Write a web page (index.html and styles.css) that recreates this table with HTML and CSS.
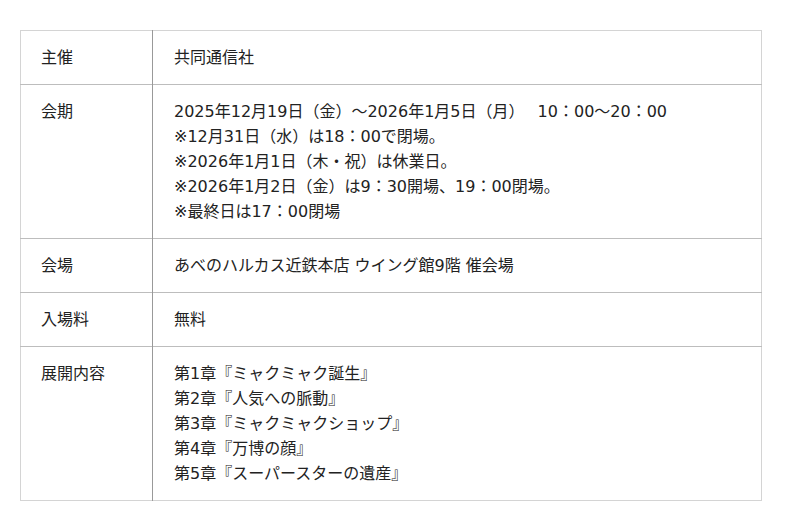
FILE: index.html
```html
<!DOCTYPE html>
<html lang="ja">
<head>
<meta charset="utf-8">
<link rel="stylesheet" href="styles.css">
</head>
<body>
<table class="info">
  <tr><th>主催</th><td>共同通信社</td></tr>
  <tr><th>会期</th><td>2025年12月19日（金）～2026年1月5日（月）　&nbsp;10：00～20：00<br>※12月31日（水）は18：00で閉場。<br>※2026年1月1日（木・祝）は休業日。<br>※2026年1月2日（金）は9：30開場、19：00閉場。<br>※最終日は17：00閉場</td></tr>
  <tr><th>会場</th><td>あべのハルカス近鉄本店 ウイング館9階 催会場</td></tr>
  <tr><th>入場料</th><td>無料</td></tr>
  <tr><th>展開内容</th><td>第1章『ミャクミャク誕生』<br>第2章『人気への脈動』<br>第3章『ミャクミャクショップ』<br>第4章『万博の顔』<br>第5章『スーパースターの遺産』</td></tr>
</table>
</body>
</html>
```
FILE: styles.css
```css
body {
  margin: 0;
  padding: 30px 38px 0 20px;
  background: #fff;
  font-family: "DejaVu Sans", "Noto Sans CJK JP", sans-serif;
  font-size: 16px;
  color: #222;
}
.info {
  width: 742px;
  border-collapse: collapse;
  border: 1px solid #d4d4d4;
}
.info tr {
  border-bottom: 1px solid #bdbdbd;
}
.info tr:last-child {
  border-bottom: 1px solid #d4d4d4;
}
.info th,
.info td {
  text-align: left;
  vertical-align: top;
  font-weight: normal;
  line-height: 25px;
  padding: 14px 20px 14px 20px;
}
.info th {
  width: 91px;
  border-right: 1px solid #999;
}
.info td {
  padding-left: 21px;
}
```
